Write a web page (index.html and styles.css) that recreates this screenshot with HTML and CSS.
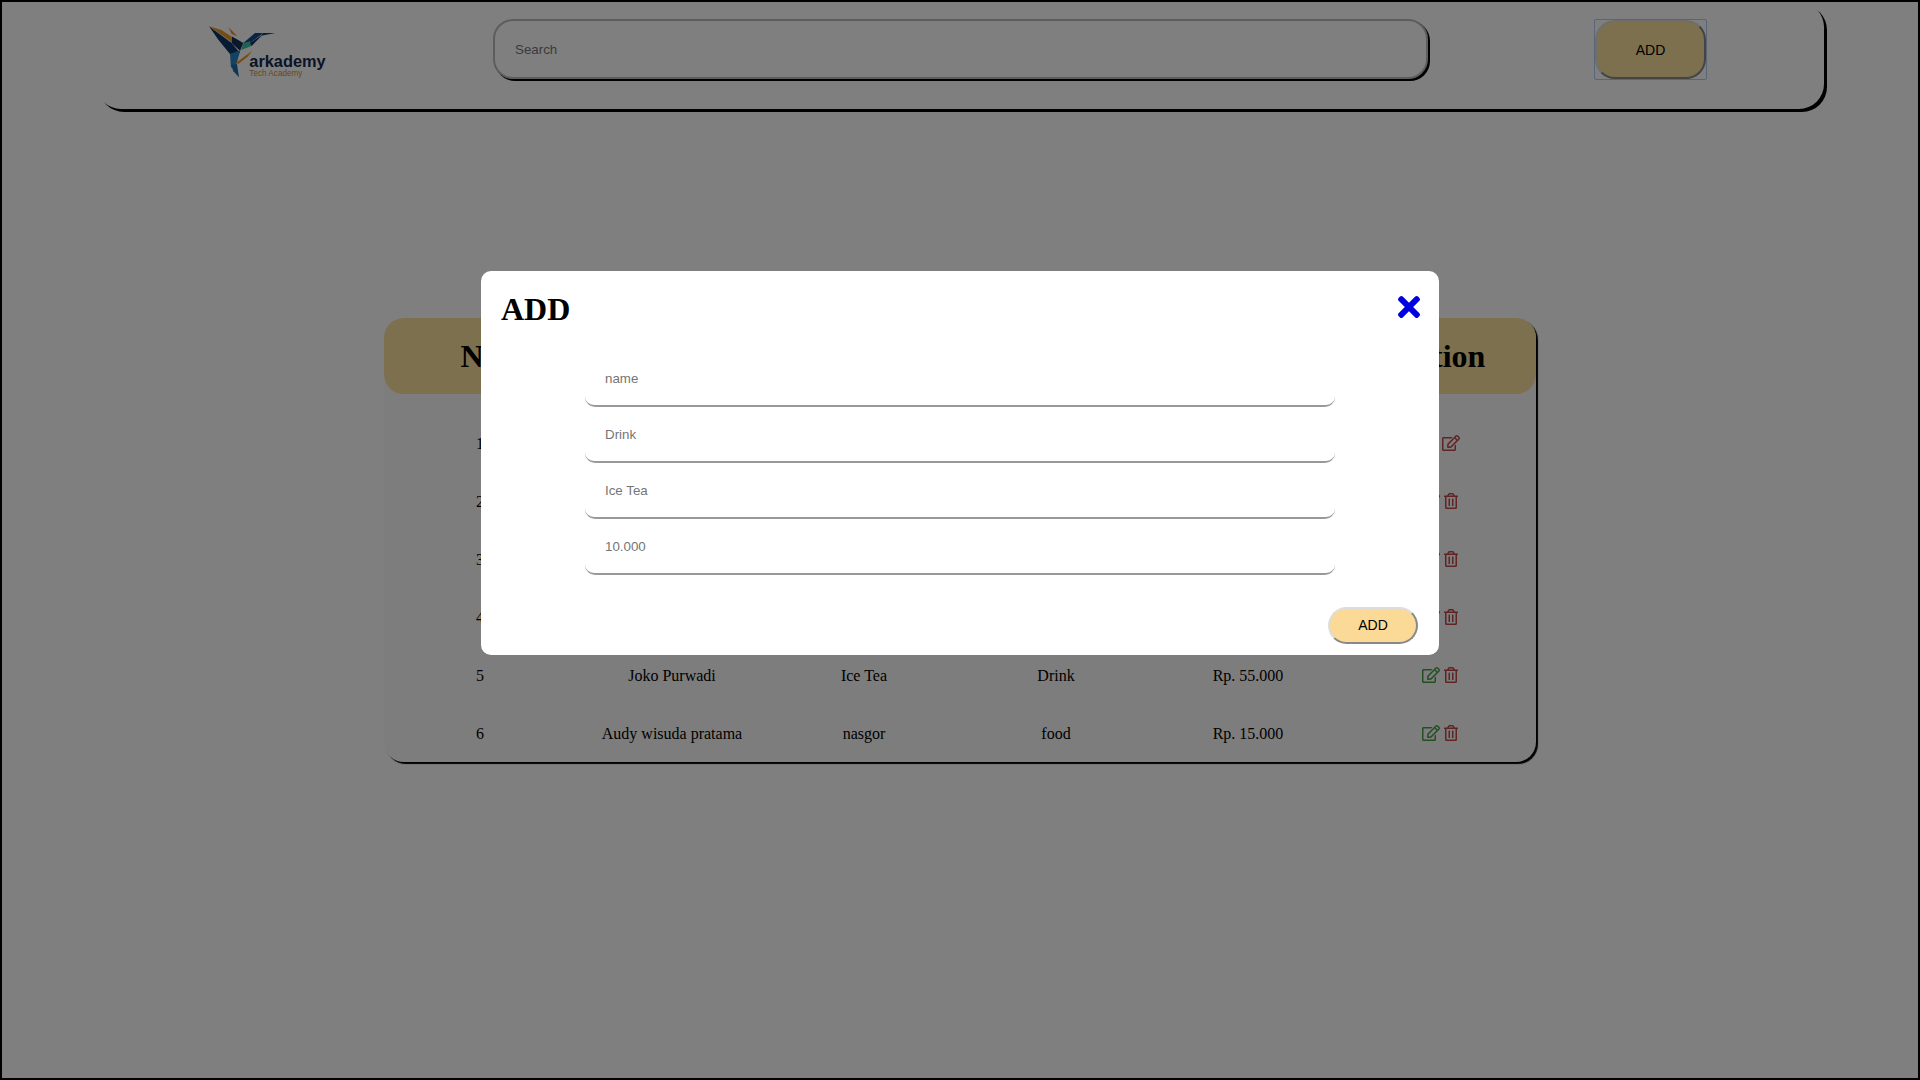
FILE: index.html
```html
<!DOCTYPE html>
<html lang="en">
<head>
<meta charset="UTF-8">
<meta name="viewport" content="width=device-width, initial-scale=1.0">
<title>Arkademy Cashier</title>
<link rel="stylesheet" href="styles.css">
</head>
<body>
    <svg class="icon-defs" width="0" height="0">
        <symbol id="icon-edit" viewBox="0 0 576 512">
            <path d="M402.3 344.9l32-32c5-5 13.7-1.5 13.7 5.7V464c0 26.5-21.5 48-48 48H48c-26.5 0-48-21.5-48-48V112c0-26.5 21.5-48 48-48h273.5c7.1 0 10.7 8.6 5.7 13.7l-32 32c-1.5 1.5-3.5 2.3-5.7 2.3H48v352h352V350.5c0-2.1.8-4.1 2.3-5.6zm156.6-201.8L296.3 405.7l-90.4 10c-26.2 2.9-48.5-19.2-45.6-45.6l10-90.4L432.9 17.1c22.9-22.9 59.9-22.9 82.7 0l43.2 43.2c22.9 22.9 22.9 60 .1 82.8zM460.1 174L402 115.9 216.2 301.8l-7.3 65.3 65.3-7.3L460.1 174zm64.8-79.7l-43.2-43.2c-4.1-4.1-10.8-4.1-14.8 0L436 82l58.1 58.1 30.9-30.9c4-4.2 4-10.8-.1-14.9z"/>
        </symbol>
        <symbol id="icon-trash" viewBox="0 0 448 512">
            <path d="M268 416h24a12 12 0 0 0 12-12V188a12 12 0 0 0-12-12h-24a12 12 0 0 0-12 12v216a12 12 0 0 0 12 12zM432 80h-82.41l-34-56.7A48 48 0 0 0 274.41 0H173.59a48 48 0 0 0-41.16 23.3L98.41 80H16A16 16 0 0 0 0 96v16a16 16 0 0 0 16 16h16v336a48 48 0 0 0 48 48h288a48 48 0 0 0 48-48V128h16a16 16 0 0 0 16-16V96a16 16 0 0 0-16-16zM171.84 50.91A6 6 0 0 1 177 48h94a6 6 0 0 1 5.15 2.91L293.61 80H154.39zM368 464H80V128h288zm-212-48h24a12 12 0 0 0 12-12V188a12 12 0 0 0-12-12h-24a12 12 0 0 0-12 12v216a12 12 0 0 0 12 12z"/>
        </symbol>
    </svg>

    <nav class="navbar">
        <svg class="logo" viewBox="36 25 360 168" width="120" height="56">
            <polygon fill="#0f3566" points="42,35 110,85 135,115 105,118 70,75"/>
            <polygon fill="#ee9a2c" points="42,35 78,45 108,65 110,82"/>
            <polygon fill="#ee8f2c" points="100,37 127,65 110,58"/>
            <polygon fill="#123058" points="110,65 145,85 135,108 110,85"/>
            <polygon fill="#134a86" points="145,85 180,55 205,55 165,85"/>
            <polygon fill="#123a70" points="205,55 241,55 198,63"/>
            <polygon fill="#3fc2a6" points="145,85 165,80 170,94 138,106"/>
            <polygon fill="#16325e" points="165,85 205,58 170,94"/>
            <polygon fill="#2a82c4" points="105,118 136,107 125,146 108,160"/>
            <polygon fill="#f09a24" points="123,144 172,108 158,126 130,148"/>
            <polygon fill="#1b6aa8" points="108,150 126,148 132,188 115,170"/>
            <text class="logo-name" x="163" y="157">arkademy</text>
            <text class="logo-sub" x="163" y="183">Tech Academy</text>
        </svg>
        <input class="search" type="text" placeholder="Search">
        <div class="add-focus">
            <button class="add-btn" type="button">ADD</button>
        </div>
    </nav>

    <section class="menu-table">
        <div class="table-head">
            <div>No</div>
            <div>Name</div>
            <div>Menu</div>
            <div>Category</div>
            <div>Price</div>
            <div>Action</div>
        </div>
        <div class="table-row">
            <div>1</div><div>Joko Purwadi</div><div>Ice Tea</div><div>Drink</div><div>Rp. 10.000</div>
            <div class="actions">
                <svg class="icon icon-green"><use href="#icon-edit"/></svg>
                <svg class="icon icon-red"><use href="#icon-edit"/></svg>
            </div>
        </div>
        <div class="table-row">
            <div>2</div><div>Joko Purwadi</div><div>Ice Tea</div><div>Drink</div><div>Rp. 20.000</div>
            <div class="actions">
                <svg class="icon icon-green"><use href="#icon-edit"/></svg>
                <svg class="icon-del icon-red"><use href="#icon-trash"/></svg>
            </div>
        </div>
        <div class="table-row">
            <div>3</div><div>Joko Purwadi</div><div>Ice Tea</div><div>Drink</div><div>Rp. 30.000</div>
            <div class="actions">
                <svg class="icon icon-green"><use href="#icon-edit"/></svg>
                <svg class="icon-del icon-red"><use href="#icon-trash"/></svg>
            </div>
        </div>
        <div class="table-row">
            <div>4</div><div>Joko Purwadi</div><div>Ice Tea</div><div>Drink</div><div>Rp. 40.000</div>
            <div class="actions">
                <svg class="icon icon-green"><use href="#icon-edit"/></svg>
                <svg class="icon-del icon-red"><use href="#icon-trash"/></svg>
            </div>
        </div>
        <div class="table-row">
            <div>5</div><div>Joko Purwadi</div><div>Ice Tea</div><div>Drink</div><div>Rp. 55.000</div>
            <div class="actions">
                <svg class="icon icon-green"><use href="#icon-edit"/></svg>
                <svg class="icon-del icon-red"><use href="#icon-trash"/></svg>
            </div>
        </div>
        <div class="table-row">
            <div>6</div><div>Audy wisuda pratama</div><div>nasgor</div><div>food</div><div>Rp. 15.000</div>
            <div class="actions">
                <svg class="icon icon-green"><use href="#icon-edit"/></svg>
                <svg class="icon-del icon-red"><use href="#icon-trash"/></svg>
            </div>
        </div>
    </section>

    <div class="overlay">
        <div class="modal">
            <div class="modal-head">
                <h1>ADD</h1>
                <svg class="close" viewBox="0 0 352 512" width="22" height="32">
                    <path d="M242.72 256l100.07-100.07c12.28-12.28 12.28-32.19 0-44.48l-22.24-22.24c-12.28-12.28-32.19-12.28-44.48 0L176 189.28 75.93 89.21c-12.28-12.28-32.19-12.28-44.48 0L9.21 111.45c-12.28 12.28-12.28 32.19 0 44.48L109.28 256 9.21 356.07c-12.28 12.28-12.28 32.19 0 44.48l22.24 22.24c12.28 12.28 32.2 12.28 44.48 0L176 322.72l100.07 100.07c12.28 12.28 32.2 12.28 44.48 0l22.24-22.24c12.28-12.28 12.28-32.19 0-44.48L242.72 256z"/>
                </svg>
            </div>
            <form class="modal-form">
                <input type="text" placeholder="name">
                <input type="text" placeholder="Drink">
                <input type="text" placeholder="Ice Tea">
                <input type="text" placeholder="10.000">
            </form>
            <div class="modal-foot">
                <button class="save-btn" type="button">ADD</button>
            </div>
        </div>
    </div>
</body>
</html>
```

FILE: styles.css
```css
* {
    box-sizing: border-box;
}
body {
    margin: 0;
    height: 1080px;
    border: 2px solid #000;
    background: #fff;
    overflow: hidden;
    font-family: "Liberation Serif", serif;
    color: #000;
}
.icon-defs {
    position: absolute;
}

/* navbar */
.navbar {
    display: grid;
    grid-template-columns: 397.5px 935px 1fr;
    width: 1728px;
    height: 107px;
    margin-left: 93.5px;
    padding-top: 17px;
    border-radius: 25px;
    box-shadow: 3px 3px 0 #000;
}
.logo {
    margin: 4px 0 0 111.5px;
}
.logo-name {
    font-family: "Liberation Sans", sans-serif;
    font-weight: bold;
    font-size: 49px;
    fill: #14284f;
}
.logo-sub {
    font-family: "Liberation Sans", sans-serif;
    font-size: 24.5px;
    fill: #e08a3a;
}
.search {
    height: 60px;
    padding: 0 20px;
    border: 2px solid #bbb;
    border-radius: 20px;
    box-shadow: 2px 2px 0 #000;
    font-family: "Liberation Sans", sans-serif;
    font-size: 13.33px;
    outline: none;
}
.add-focus {
    width: 113px;
    height: 61px;
    margin-left: 166px;
    border: 1px solid #b0c8f4;
    border-radius: 2px;
}
.add-btn {
    display: block;
    width: 100%;
    height: 100%;
    border: 2px outset #ddd;
    border-radius: 20px;
    background: #fbe09c;
    font-family: "Liberation Sans", sans-serif;
    font-size: 14px;
    color: #000;
}

/* table */
.menu-table {
    width: 1152px;
    height: 444px;
    margin: 209px auto 0;
    border-radius: 20px;
    box-shadow: 2px 2px 1px #000;
    background: #fafafa;
}
.table-head,
.table-row {
    display: grid;
    grid-template-columns: repeat(6, 1fr);
    align-items: center;
    text-align: center;
}
.table-head {
    height: 76px;
    margin-bottom: 20px;
    border-radius: 20px;
    background: #fbe09c;
    font-size: 32px;
    font-weight: bold;
}
.table-row {
    height: 58px;
    padding-top: 2px;
    font-size: 16px;
}
.actions {
    display: flex;
    justify-content: center;
    gap: 4px;
    margin-top: -2px;
}
.icon {
    width: 18px;
    height: 16px;
}
.icon-del {
    width: 14px;
    height: 16px;
}
.icon-green {
    fill: #479f47;
}
.icon-red {
    fill: #c04848;
}

/* add dialog */
.overlay {
    position: fixed;
    top: 0;
    left: 0;
    width: 100%;
    height: 100%;
    display: flex;
    justify-content: center;
    align-items: flex-start;
    padding-top: 271px;
    background: rgba(0, 0, 0, 0.5);
}
.modal {
    width: 958px;
    height: 384px;
    border-radius: 10px;
    background: #fff;
}
.modal-head {
    display: flex;
    justify-content: space-between;
    padding: 20px 19px 0 20px;
    height: 91px;
}
.modal-head h1 {
    margin: 0;
    font-size: 32px;
    line-height: 37px;
}
.close {
    fill: #0000e0;
}
.modal-form {
    display: flex;
    flex-direction: column;
    gap: 11px;
    width: 750px;
    margin: 0 auto;
}
.modal-form input {
    height: 45px;
    padding: 0 20px 10px;
    border: none;
    border-bottom: 2px solid #999;
    border-radius: 10px;
    font-family: "Liberation Sans", sans-serif;
    font-size: 13.33px;
    outline: none;
}
.modal-foot {
    display: flex;
    justify-content: flex-end;
    padding: 32px 21px 0 0;
}
.save-btn {
    width: 90px;
    height: 37px;
    padding-bottom: 3px;
    border: 2px outset #ddd;
    border-radius: 19px;
    background: #fbd996;
    font-family: "Liberation Sans", sans-serif;
    font-size: 14px;
    color: #000;
}
```
